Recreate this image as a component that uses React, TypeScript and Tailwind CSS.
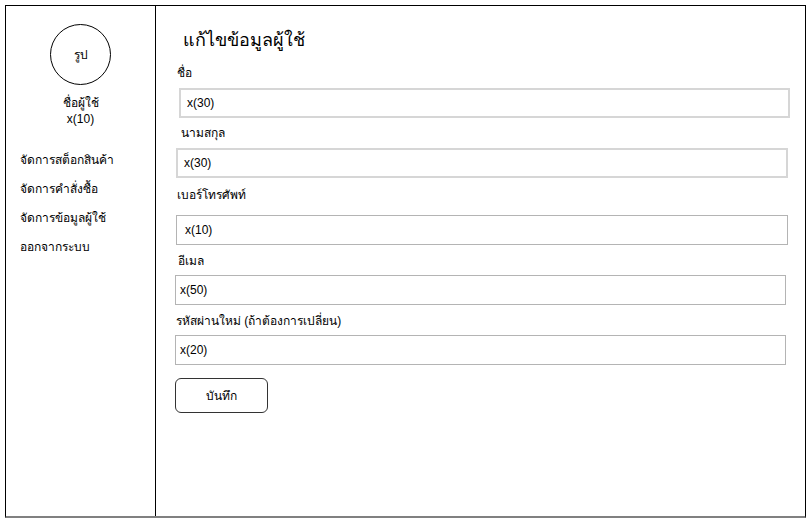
import React from "react";

const menu = ["จัดการสต็อกสินค้า", "จัดการคำสั่งซื้อ", "จัดการข้อมูลผู้ใช้", "ออกจากระบบ"];

interface Field {
  label: string;
  value: string;
  labelClass: string;
  inputClass: string;
}

const fields: Field[] = [
  {
    label: "ชื่อ",
    value: "x(30)",
    labelClass: "mt-[13px] ml-[21px]",
    inputClass: "mt-[7px] ml-[23px] w-[611px] border-2 border-[#d6d6d6] pl-[6px]",
  },
  {
    label: "นามสกุล",
    value: "x(30)",
    labelClass: "mt-[7px] ml-[25px]",
    inputClass: "mt-[7px] ml-[20px] w-[612px] border-2 border-[#d6d6d6] pl-[6px]",
  },
  {
    label: "เบอร์โทรศัพท์",
    value: "x(10)",
    labelClass: "mt-[9px] ml-[21px]",
    inputClass: "mt-[12px] ml-[20px] w-[612px] border border-[#b4b4b4] pl-[8px]",
  },
  {
    label: "อีเมล",
    value: "x(50)",
    labelClass: "mt-[8px] ml-[22px]",
    inputClass: "mt-[6px] ml-[19px] w-[611px] border border-[#b4b4b4] pl-[4px]",
  },
  {
    label: "รหัสผ่านใหม่ (ถ้าต้องการเปลี่ยน)",
    value: "x(20)",
    labelClass: "mt-[8px] ml-[20px]",
    inputClass: "mt-[6px] ml-[19px] w-[611px] border border-[#b4b4b4] pl-[4px]",
  },
];

export default function App() {
  return (
    <div className="w-[811px] h-[524px] bg-white p-[5px] text-black font-['Liberation_Sans',sans-serif]">
      <div className="flex w-[801px] h-[513px] border-l border-t border-r border-black border-b-2 border-b-[#808080]">
        {/* Sidebar */}
        <aside className="w-[150px] shrink-0 border-r border-black flex flex-col">
          <div className="flex flex-col items-center">
            <div className="mt-[18px] w-[61px] h-[61px] rounded-full border border-black flex items-center justify-center text-[12px]">
              รูป
            </div>
            <div className="mt-[10px] text-[12px] leading-4 text-center">
              <div className="h-4">ชื่อผู้ใช้</div>
              <div className="h-4">x(10)</div>
            </div>
          </div>
          <nav className="mt-[25px] pl-[14px] flex flex-col gap-[13px] text-[12px] leading-4">
            {menu.map((m) => (
              <div key={m} className="h-4">
                {m}
              </div>
            ))}
          </nav>
        </aside>

        {/* Main */}
        <main className="flex-1 flex flex-col items-start pt-[22px]">
          <h1 className="ml-[27px] h-6 text-[18px] leading-6">แก้ไขข้อมูลผู้ใช้</h1>
          {fields.map((f) => (
            <React.Fragment key={f.label}>
              <label className={`h-4 text-[12px] leading-4 ${f.labelClass}`}>{f.label}</label>
              <div className={`h-[30px] flex items-center text-[12px] text-black ${f.inputClass}`}>
                {f.value}
              </div>
            </React.Fragment>
          ))}
          <button className="mt-[13px] ml-[19px] w-[93px] h-[35px] rounded-md border border-[#333] text-[12px] flex items-center justify-center">
            บันทึก
          </button>
        </main>
      </div>
    </div>
  );
}
